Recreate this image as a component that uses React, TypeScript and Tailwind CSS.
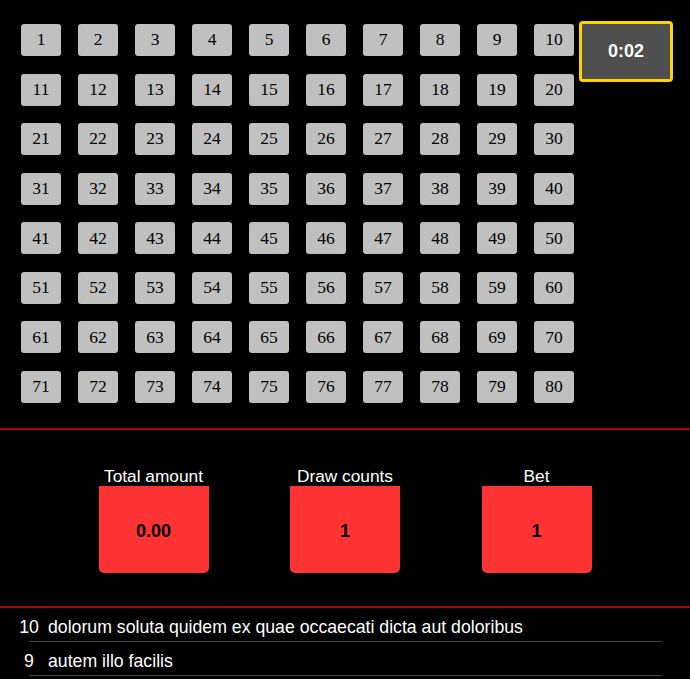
import React from 'react';

const numbers = Array.from({ length: 80 }, (_, i) => i + 1);

const stats = [
    { label: 'Total amount', value: '0.00' },
    { label: 'Draw counts', value: '1' },
    { label: 'Bet', value: '1' },
];

const history = [
    { id: 10, text: 'dolorum soluta quidem ex quae occaecati dicta aut doloribus' },
    { id: 9, text: 'autem illo facilis' },
];

export default function App() {
    return (
        <div className="min-h-screen bg-black text-white font-['Liberation_Sans',Arial,sans-serif]">
            {/* Number board + timer */}
            <div className="flex items-start pl-[21px] pt-[21px] pb-[25px]">
                <div className="mt-[3px] grid grid-cols-[repeat(10,40px)] gap-x-[17px] gap-y-[17.57px]">
                    {numbers.map((n) => (
                        <button
                            key={n}
                            className="h-8 w-10 rounded-[3px] bg-[#c0c0c0] text-black text-[17.5px] leading-none font-['Liberation_Serif','Times_New_Roman',serif] flex items-center justify-center"
                        >
                            {n}
                        </button>
                    ))}
                </div>
                <div className="ml-[5px] w-[94px] h-[61px] rounded-[4px] border-[3px] border-[#ffd400] bg-[#4f4f4f] flex items-center justify-center text-[18px] font-bold text-white">
                    0:02
                </div>
            </div>

            <div className="h-[2px] bg-[#b00000]" />

            {/* Stats */}
            <div className="flex justify-evenly px-[17px] pt-[36px] pb-[33px]">
                {stats.map((s) => (
                    <div key={s.label} className="flex flex-col items-center">
                        <p className="text-[17.3px] leading-[20px] text-white">{s.label}</p>
                        <div className="w-[110px] h-[87px] rounded-b-[5px] bg-[#ff3333] flex items-center justify-center pt-[5px] text-[18px] font-bold text-black">
                            {s.value}
                        </div>
                    </div>
                ))}
            </div>

            <div className="h-[2px] bg-[#b00000]" />

            {/* History list */}
            <ul className="ml-[29px] w-[633px]">
                {history.map((h) => (
                    <li key={h.id} className="h-[34px] pt-[6px] border-b border-[#444] flex items-center text-[17.7px] text-white">
                        <span className="-ml-[15px] w-[30px] text-center">{h.id}</span>
                        <span className="ml-[4px]">{h.text}</span>
                    </li>
                ))}
            </ul>
        </div>
    );
}
